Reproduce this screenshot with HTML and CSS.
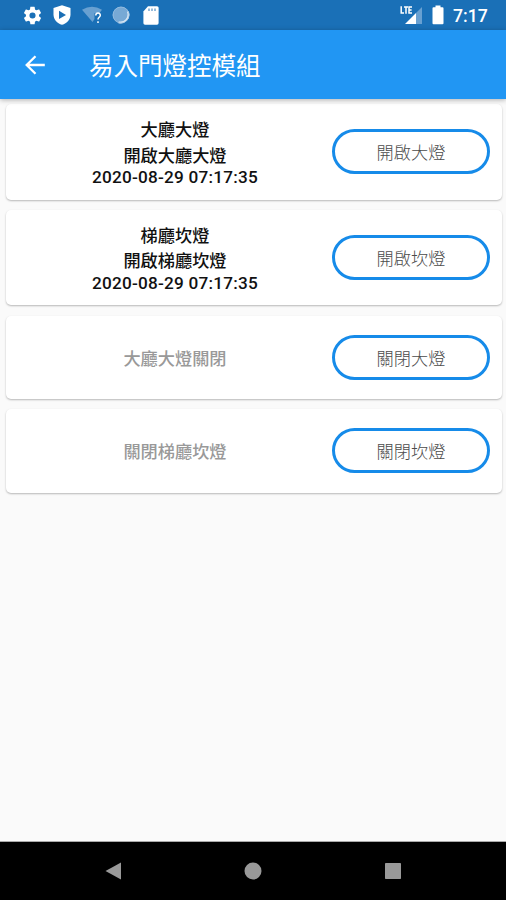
FILE: index.html
```
<!DOCTYPE html>
<html lang="zh-Hant">
<head>
<meta charset="utf-8">
<title>易入門燈控模組</title>
<link rel="stylesheet" href="styles.css">
</head>
<body>
<div class="status">
  <svg class="gear" width="21" height="21" viewBox="0 0 24 24" fill="#fff"><path d="M19.43 12.98c.04-.32.07-.64.07-.98s-.03-.66-.07-.98l2.11-1.65c.19-.15.24-.42.12-.64l-2-3.46c-.12-.22-.39-.3-.61-.22l-2.49 1c-.52-.4-1.08-.73-1.69-.98l-.38-2.65A.49.49 0 0 0 14 2h-4c-.25 0-.46.18-.49.42l-.38 2.65c-.61.25-1.17.59-1.69.98l-2.49-1c-.23-.09-.49 0-.61.22l-2 3.46c-.13.22-.07.49.12.64l2.11 1.65c-.04.32-.07.65-.07.98s.03.66.07.98l-2.11 1.65c-.19.15-.24.42-.12.64l2 3.46c.12.22.39.3.61.22l2.49-1c.52.4 1.08.73 1.69.98l.38 2.65c.03.24.24.42.49.42h4c.25 0 .46-.18.49-.42l.38-2.65c.61-.25 1.17-.59 1.69-.98l2.49 1c.23.09.49 0 .61-.22l2-3.46c.12-.22.07-.49-.12-.64l-2.11-1.65zM12 15.5a3.5 3.5 0 1 1 0-7 3.5 3.5 0 0 1 0 7z"/></svg>
  <svg class="shield" width="18" height="20" viewBox="0 0 18 20"><path d="M9 0.3L17.5 3V9.500C17.500 14.500 14 18.500 9 19.800C4 18.500.5 14.500.5 9.500V3z" fill="#fff"/><path d="M6 5.800L13 10L6 14z" fill="#1b6fb5"/></svg>
  <svg class="wifi" width="21" height="20" viewBox="0 0 21 20"><path d="M0 4.800Q10 -1.500 20 4.800L17.500 8H12.500V14L10.500 17z" fill="#68a0d1"/><path d="M13.800 10.500C13.800 7.300 18.300 7.300 18.300 10.300C18.300 12.300 16 12.300 16 14.500M16 16.200V18" fill="none" stroke="#fff" stroke-width="1.500"/></svg>
  <svg class="orb" width="18" height="18" viewBox="0 0 18 18"><circle cx="9" cy="9" r="8.300" fill="#77a9d5"/><path d="M15.800 5.500A8 8 0 0 1 6.500 16.300" fill="none" stroke="#d9e7f4" stroke-width="1.900"/><circle cx="9" cy="9" r="8" fill="none" stroke="#9fc3e2" stroke-width=".7"/></svg>
  <svg class="sd" width="16" height="19" viewBox="0 0 16 19"><path d="M5 .2H14Q15.600 .2 15.600 1.800V17Q15.600 18.700 14 18.700H2Q.4 18.700 .4 17V5.500z" fill="#fff"/><path d="M6 2.500V5M9 2.500V5M12 2.500V5" stroke="#75a6d0" stroke-width="1.500"/></svg>
  <svg class="cell" width="23" height="20" viewBox="0 0 23 20"><path d="M22 2V19H16V8z" fill="#68a0d1"/><path d="M16 8V19H5z" fill="#fff"/><path d="M1.200 1.200V8H4M4 2H8M6 2V8.700M12 2H9V8H12M9 5H11.600" fill="none" stroke="#fff" stroke-width="1.500"/></svg>
  <svg class="battery" width="12" height="20" viewBox="0 0 12 20"><path d="M3.500 .5H8.500V2.300H10.500Q11.500 2.300 11.500 3.300V18.200Q11.500 19.200 10.500 19.200H1.500Q.5 19.200 .5 18.200V3.300Q.5 2.300 1.500 2.300H3.500z" fill="#fff"/></svg>
  <span class="clock">7:17</span>
</div>
<header class="appbar">
  <svg width="20" height="20" viewBox="0 0 20 20" fill="none" stroke="#fff" stroke-width="2.300"><path d="M19.800 10H1.800M10.500 1.200L1.700 10L10.500 18.800"/></svg>
  <h1>易入門燈控模組</h1>
</header>
<main>
  <section class="card tall"><div class="info"><p>大廳大燈</p><p>開啟大廳大燈</p><p class="date">2020-08-29 07:17:35</p></div><button>開啟大燈</button></section>
  <section class="card tall"><div class="info"><p>梯廳坎燈</p><p>開啟梯廳坎燈</p><p class="date">2020-08-29 07:17:35</p></div><button>開啟坎燈</button></section>
  <section class="card off"><div class="info"><p>大廳大燈關閉</p></div><button>關閉大燈</button></section>
  <section class="card off"><div class="info"><p>關閉梯廳坎燈</p></div><button>關閉坎燈</button></section>
</main>
<nav>
  <svg width="18" height="20" viewBox="0 0 18 20"><path d="M1.500 10L17 1.500V18.500z" fill="#999"/></svg>
  <svg width="18" height="18" viewBox="0 0 18 18"><circle cx="9" cy="9" r="8.500" fill="#999"/></svg>
  <svg width="18" height="18" viewBox="0 0 18 18"><rect x="1" y="1" width="16" height="16" rx=".7" fill="#999"/></svg>
</nav>
</body>
</html>
```
FILE: styles.css
```
* { box-sizing: border-box; }
body {
  margin: 0;
  height: 900px;
  display: flex;
  flex-direction: column;
  overflow: hidden;
  background: #fafafa;
  font-family: Roboto, "Noto Sans CJK TC", sans-serif;
}
h1, p { margin: 0; }
svg { display: block; flex: none; }
.status {
  height: 30px;
  flex: none;
  display: flex;
  align-items: center;
  padding: 0 18px 0 22px;
  background: #1a70b7;
}
.shield { margin-left: 10px; }
.wifi { margin-left: 11px; }
.orb { margin-left: 9px; }
.sd { margin-left: 13px; }
.cell { margin-left: auto; }
.battery { margin-left: 9px; }
.clock {
  width: 35px;
  margin-left: 9px;
  padding-top: 2px;
  color: #fff;
  font-size: 17.700px;
  font-weight: 500;
  line-height: 28px;
  white-space: nowrap;
}
.appbar {
  height: 69px;
  flex: none;
  display: flex;
  align-items: center;
  padding-left: 25px;
  background: #2196f3;
  box-shadow: 0 1px 5px rgba(0, 0, 0, .3);
  z-index: 1;
}
h1 {
  margin-left: 44px;
  padding-top: 4px;
  color: #fff;
  font-size: 24.500px;
  font-weight: 400;
  line-height: 40px;
}
main {
  flex: 1;
  display: flex;
  flex-direction: column;
  gap: 10px;
  padding: 5px 4px 0 6px;
}
.card {
  height: 83.500px;
  flex: none;
  display: flex;
  align-items: center;
  padding-right: 12px;
  background: #fff;
  border-radius: 5px;
  box-shadow: 0 1px 2px rgba(0, 0, 0, .27);
}
.tall { height: 95.500px; }
.tall + .off { margin-top: .5px; }
.info {
  width: 326px;
  padding-left: 12px;
  text-align: center;
  color: #111;
  font-size: 17.200px;
  font-weight: 500;
  line-height: 25.500px;
}
.tall .info { padding-top: 2px; }
.off .info { color: #999; padding-top: 4px; }
.date { margin-top: -2px; line-height: 20px; letter-spacing: .22px; }
button {
  width: 158px;
  height: 45px;
  padding: 3px 0 0;
  background: #fff;
  border: 3px solid #168be9;
  border-radius: 23px;
  color: #4b4b4b;
  font: 300 17.200px/37px Roboto, "Noto Sans CJK TC", sans-serif;
}
nav {
  height: 58px;
  flex: none;
  display: flex;
  align-items: center;
  justify-content: space-between;
  padding: 0 104px;
  background: #000;
  box-shadow: 0 -1px #aaa;
}
```
